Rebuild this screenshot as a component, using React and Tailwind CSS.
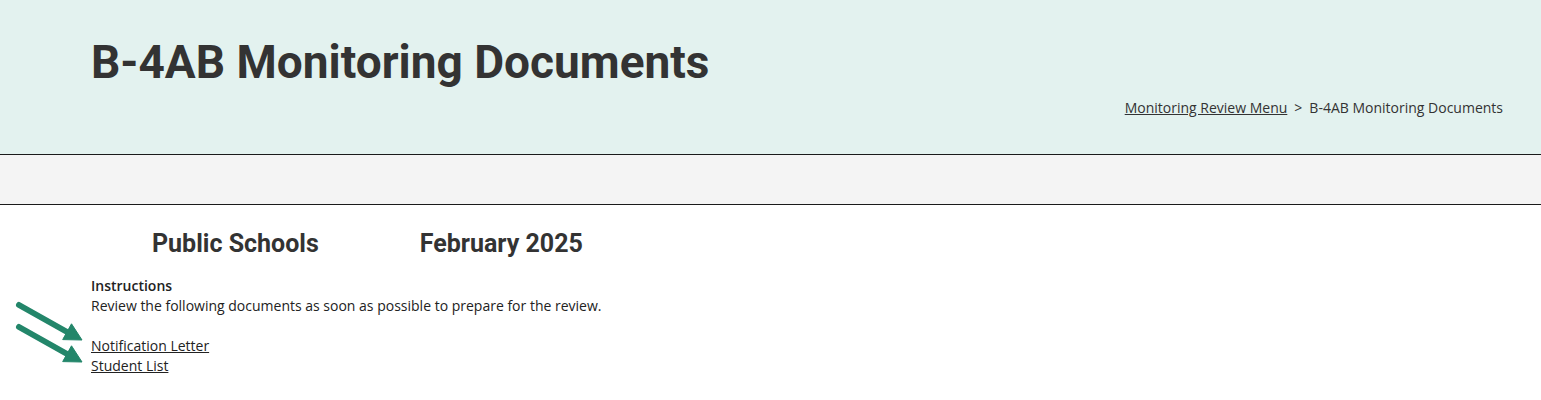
export default function App() {
  return (
    <div className="w-[1541px] h-[400px] bg-white text-[#333] overflow-hidden" style={{ fontFamily: '"Open Sans", sans-serif' }}>
      <header className="h-[155px] bg-[#e3f2ef] border-b border-[#1a1a1a] relative">
        <h1 className="absolute left-[91px] top-[39px] text-[46px] leading-none font-bold text-[#333]" style={{ fontFamily: 'Roboto, sans-serif' }}>
          B-4AB Monitoring Documents
        </h1>
        <nav className="absolute right-[38px] top-[98px] text-[14px] leading-[20px] text-[#333] flex gap-[7px]">
          <a href="#" className="underline">Monitoring Review Menu</a>
          <span>&gt;</span>
          <span>B-4AB Monitoring Documents</span>
        </nav>
      </header>
      <div className="h-[50px] bg-[#f4f4f4] border-b border-[#1a1a1a]" />
      <main className="relative pl-[91px] pt-[24px]">
        <div className="flex pl-[61px] gap-[101px] text-[25px] font-bold leading-[30px] text-[#333]" style={{ fontFamily: 'Roboto, sans-serif' }}>
          <span>Public Schools</span>
          <span>February 2025</span>
        </div>
        <div className="mt-[17px] text-[14px] leading-[20px] text-[#222]">
          <div className="font-semibold">Instructions</div>
          <div>Review the following documents as soon as possible to prepare for the review.</div>
          <div className="h-[20px]" />
          <div><a href="#" className="underline">Notification Letter</a></div>
          <div><a href="#" className="underline">Student List</a></div>
        </div>
        <svg className="absolute left-0 top-[90px]" width="90" height="80" viewBox="0 90 90 80">
          <g fill="#23866a" stroke="#23866a">
            <line x1="19" y1="100" x2="68" y2="127.5" strokeWidth="6" strokeLinecap="round" />
            <polygon points="82,135 62.7,134.6 71.5,118.8" strokeWidth="1" strokeLinejoin="round" />
            <line x1="19" y1="122" x2="68" y2="149.5" strokeWidth="6" strokeLinecap="round" />
            <polygon points="82,157 62.7,156.6 71.5,140.8" strokeWidth="1" strokeLinejoin="round" />
          </g>
        </svg>
      </main>
    </div>
  );
}
